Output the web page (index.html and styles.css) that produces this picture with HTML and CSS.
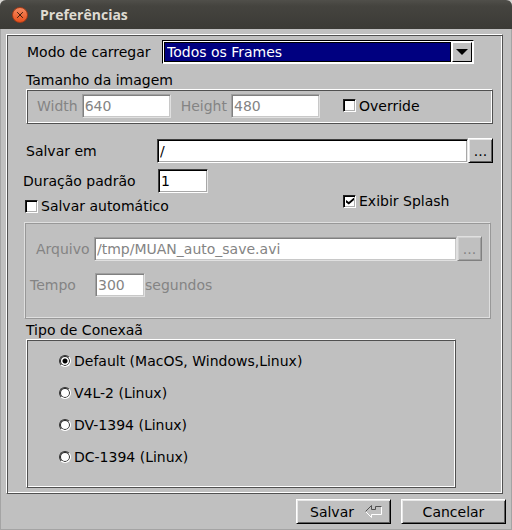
FILE: index.html
```html
<!DOCTYPE html>
<html lang="pt-BR">
<head>
<meta charset="utf-8">
<meta name="viewport" content="width=device-width, initial-scale=1">
<title>Preferências</title>
<link rel="stylesheet" href="styles.css">
</head>
<body>
<div class="window">
  <header class="titlebar">
    <button class="close" type="button" aria-label="Fechar">
      <svg viewBox="0 0 14 14" aria-hidden="true"><path d="M4.500 4.500l5 5M9.500 4.500l-5 5"/></svg>
    </button>
    <h1>Preferências</h1>
  </header>
  <form class="content">
    <div class="frame main">
      <div class="row mode">
        <label for="mode">Modo de carregar</label>
        <div class="choice">
          <select id="mode"><option>Todos os Frames</option></select>
          <span class="arrow"><svg viewBox="0 0 12 6" aria-hidden="true"><path d="M0 0h12L6 6z"/></svg></span>
        </div>
      </div>

      <h2>Tamanho da imagem</h2>
      <div class="frame row size">
        <label for="width" class="off">Width</label>
        <input id="width" class="field dimension" type="text" value="640" disabled>
        <label for="height" class="off height-label">Height</label>
        <input id="height" class="field dimension" type="text" value="480" disabled>
        <label class="check override"><input type="checkbox">Override</label>
      </div>

      <div class="row save-in">
        <label for="folder">Salvar em</label>
        <input id="folder" class="field wide" type="text" value="/">
        <button class="button browse" type="button">...</button>
      </div>

      <div class="options">
        <div>
          <div class="row duration">
            <label for="duration">Duração padrão</label>
            <input id="duration" class="field number" type="text" value="1">
          </div>
          <label class="check autosave"><input type="checkbox">Salvar automático</label>
        </div>
        <label class="check splash"><input type="checkbox" checked>Exibir Splash</label>
      </div>

      <div class="frame faded auto">
        <div class="row">
          <label for="file" class="off file-label">Arquivo</label>
          <input id="file" class="field wide" type="text" value="/tmp/MUAN_auto_save.avi" disabled>
          <button class="button browse" type="button" disabled>...</button>
        </div>
        <div class="row time">
          <label for="time" class="off time-label">Tempo</label>
          <input id="time" class="field number" type="text" value="300" disabled>
          <span class="off">segundos</span>
        </div>
      </div>

      <h2 id="connection">Tipo de Conexaã</h2>
      <div class="frame connection" role="radiogroup" aria-labelledby="connection">
        <label class="radio"><input type="radio" name="connection" checked>Default (MacOS, Windows,Linux)</label>
        <label class="radio"><input type="radio" name="connection">V4L-2 (Linux)</label>
        <label class="radio"><input type="radio" name="connection">DV-1394 (Linux)</label>
        <label class="radio"><input type="radio" name="connection">DC-1394 (Linux)</label>
      </div>
    </div>

    <footer class="actions">
      <button class="button save" type="button">Salvar
        <svg viewBox="0 0 18 14" aria-hidden="true">
          <path class="light" d="M16.500 1.500v8h-10v3l-6-6"/>
          <path class="dark" d="M.5 6.500l6-6v4h4v-3h6"/>
        </svg>
      </button>
      <button class="button cancel" type="button">Cancelar</button>
    </footer>
  </form>
</div>
</body>
</html>
```
FILE: styles.css
```css
* {
  box-sizing: border-box;
}

body {
  margin: 0;
  background: #d8d6d2;
  color: #000;
  font: 14px/16px "DejaVu Sans", sans-serif;
}

input,
select,
button {
  margin: 0;
  font: inherit;
  color: inherit;
}

.window {
  display: flex;
  flex-direction: column;
  min-height: 100vh;
  border-radius: 6px 6px 0 0;
  overflow: hidden;
  background: #c0c0c0;
  box-shadow: inset 1px -1px #a4a4a4, inset -1px 0 #a4a4a4;
}

/* Title bar */
.titlebar {
  display: flex;
  align-items: center;
  gap: 12px;
  height: 29px;
  padding: 0 12px;
  background: linear-gradient(#504f4a, #45443f 20%, #3b3a36);
  color: #dfdbd2;
}

.titlebar h1 {
  margin: 0;
  font: bold 14px/16px "Open Sans", sans-serif;
}

.close {
  width: 16px;
  height: 16px;
  padding: 0;
  border: 1px solid #a83c18;
  border-radius: 50%;
  background: linear-gradient(#f58a60, #e9511d);
}

.close svg {
  display: block;
  width: 14px;
  height: 14px;
  fill: none;
  stroke: #40200f;
  stroke-width: 1px;
  stroke-linecap: square;
}

/* Embossed frames */
.frame {
  border: 1px solid;
  border-color: #fff #505050 #505050 #fff;
  box-shadow: inset 1px 1px #505050, inset -1px -1px #fff;
}

.frame.faded {
  border-color: #dfdfdf #989898 #989898 #dfdfdf;
  box-shadow: inset 1px 1px #989898, inset -1px -1px #dfdfdf;
}

.content {
  display: flex;
  flex: 1;
  flex-direction: column;
  padding: 5px 6px;
}

.content > .main {
  margin-right: 3px;
  padding: 5px 9px 5px 19px;
}

.row {
  display: flex;
  align-items: center;
}

.off {
  color: #848484;
}

h2 {
  margin: 0;
  font-size: 14px;
  font-weight: normal;
  line-height: 16px;
}

/* Fields */
.field {
  min-width: 0;
  height: 24px;
  padding: 0 2px;
  border: 1px solid;
  border-color: #404040 #e8e8e8 #fff #404040;
  border-radius: 0;
  background: #fff;
  box-shadow: inset 1px 1px #000, inset -1px -1px #a8a8a8;
  outline: 0;
}

.field:disabled {
  border-color: #a0a0a0 #e0e0e0 #e0e0e0 #a0a0a0;
  box-shadow: inset 1px 1px #808080, inset -1px -1px #c8c8c8;
  color: #848484;
}

.dimension {
  width: 89px;
}

.number {
  width: 50px;
}

.wide {
  flex: 1;
}

.choice {
  display: flex;
  flex: 1;
  height: 24px;
  padding: 1px;
  border: 1px solid;
  border-color: #000 #fff #fff #000;
  background: #fff;
}

.choice select {
  flex: 1;
  min-width: 0;
  padding: 0 2px;
  border: 1px solid #000;
  border-radius: 0;
  appearance: none;
  background: #000080;
  color: #fff;
  outline: 0;
}

.arrow {
  display: flex;
  align-items: center;
  justify-content: center;
  width: 20px;
  margin-left: 1px;
  border: 1px solid;
  border-color: #fff #000 #000 #fff;
  background: #c0c0c0;
}

.arrow svg {
  width: 12px;
  height: 6px;
}

/* Buttons */
.button {
  height: 25px;
  padding: 0;
  border: 1px solid;
  border-color: #fff #000 #000 #fff;
  border-radius: 0;
  background: #c0c0c0;
  box-shadow: inset 1px 1px #e8e8e8, inset -1px -1px #606060;
}

.button:disabled {
  border-color: #e0e0e0 #808080 #808080 #e0e0e0;
  box-shadow: inset 1px 1px #d0d0d0, inset -1px -1px #a0a0a0;
  color: #848484;
}

.browse {
  width: 25px;
}

/* Check boxes and radio buttons */
.check,
.radio {
  display: flex;
  align-items: center;
  gap: 3px;
}

.check input {
  width: 13px;
  height: 13px;
  border: 1px solid;
  border-color: #202020 #fff #fff #202020;
  appearance: none;
  background: #fff;
  box-shadow: inset 1px 1px #000, inset -1px -1px #b0b0b0;
}

.check input:checked::before {
  content: "";
  display: block;
  width: 8px;
  height: 7px;
  margin: 2px;
  background: #000;
  clip-path: polygon(0 35%, 35% 65%, 100% 0, 100% 35%, 35% 100%, 0 70%);
}

.radio input {
  width: 12px;
  height: 12px;
  border: 1px solid;
  border-color: #303030 #fff #fff #303030;
  border-radius: 50%;
  appearance: none;
  background: #fff;
  box-shadow: inset 0 0 0 1px #202020;
}

.radio input:checked {
  background: radial-gradient(circle, #000 2px, #fff 3px);
}

/* Sections */
.mode {
  margin-right: 19px;
}

.mode label {
  width: 136px;
  padding-left: 1px;
}

.mode + h2 {
  margin-top: 8px;
}

.size {
  height: 35px;
  margin-top: 1px;
  padding: 0 10px 2px;
}

.size .dimension {
  margin-left: 4px;
}

.height-label {
  margin-left: 10px;
}

.override {
  margin-left: 23px;
}

.save-in {
  margin-top: 14px;
}

.save-in label {
  width: 131px;
}

.options {
  display: grid;
  grid-template-columns: 317px 1fr;
  align-items: center;
  margin-top: 6px;
}

.duration {
  margin-left: -3px;
}

.duration label {
  width: 135px;
}

.autosave {
  margin: 5px 0 0 -1px;
}

.splash {
  margin-top: 19px;
}

.auto {
  height: 97px;
  margin: 8px 2px 0 -2px;
  padding: 13px 8px 0 5px;
}

.file-label {
  width: 64px;
  padding-left: 6px;
}

.time {
  margin-top: 12px;
}

.time-label {
  width: 65px;
}

.auto + h2 {
  margin-top: 3px;
}

.connection {
  display: grid;
  gap: 16px;
  height: 149px;
  margin: 1px 37px 0 0;
  padding: 13px 32px 0;
  align-content: start;
}

.actions {
  display: flex;
  justify-content: flex-end;
  gap: 10px;
  padding-top: 5px;
}

.save {
  display: flex;
  align-items: center;
  justify-content: center;
  gap: 11px;
  width: 95px;
  padding-left: 6px;
}

.save svg {
  width: 18px;
  height: 14px;
  fill: none;
}

.dark {
  stroke: #505050;
}

.light {
  stroke: #fff;
}

.cancel {
  width: 105px;
}
```
